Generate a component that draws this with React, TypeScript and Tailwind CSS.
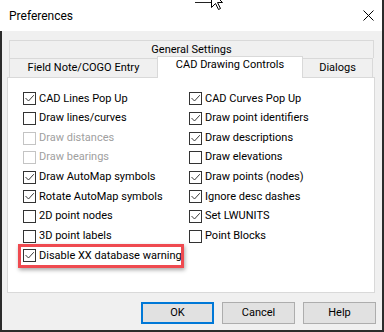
import React from "react";

type Item = { label: string; checked?: boolean; disabled?: boolean; mark?: boolean };

const leftItems: Item[] = [
  { label: "CAD Lines Pop Up", checked: true },
  { label: "Draw lines/curves" },
  { label: "Draw distances", disabled: true },
  { label: "Draw bearings", disabled: true },
  { label: "Draw AutoMap symbols", checked: true },
  { label: "Rotate AutoMap symbols", checked: true },
  { label: "2D point nodes" },
  { label: "3D point labels" },
  { label: "Disable XX database warning", checked: true, mark: true },
];

const rightItems: Item[] = [
  { label: "CAD Curves Pop Up", checked: true },
  { label: "Draw point identifiers", checked: true },
  { label: "Draw descriptions", checked: true },
  { label: "Draw elevations" },
  { label: "Draw points (nodes)", checked: true },
  { label: "Ignore desc dashes", checked: true },
  { label: "Set LWUNITS", checked: true },
  { label: "Point Blocks" },
];

function CheckRow({ item }: { item: Item }) {
  return (
    <div className="relative flex items-center h-[19.625px]">
      {item.mark && (
        <span className="absolute left-[-5px] top-[-2px] w-[166px] h-[24px] border-[3px] border-[#ef4a50] shadow-[1px_2px_4px_rgba(0,0,0,0.35)]" />
      )}
      <span
        className={`w-[13px] h-[13px] border bg-white shrink-0 ${
          item.disabled ? "border-[#c4c4c4]" : "border-[#333333]"
        }`}
      >
        {item.checked && (
          <svg width="11" height="11" viewBox="0 0 11 11" className="block">
            <polyline points="1.5,5 4.5,8 9.8,2.2" fill="none" stroke="#3a3a3a" strokeWidth="1" />
          </svg>
        )}
      </span>
      <span className={`ml-[3px] whitespace-nowrap ${item.disabled ? "text-[#a0a0a0]" : "text-black"}`}>
        {item.label}
      </span>
    </div>
  );
}

export default function App() {
  return (
    <div
      className="relative w-[384px] h-[332px] overflow-hidden bg-white border-r-2 border-[#2b2b2b] flex flex-col text-[11px] text-black"
      style={{ fontFamily: "Roboto, 'Liberation Sans', sans-serif" }}
    >
      {/* Title bar */}
      <div className="h-[31px] shrink-0 flex items-center justify-between pl-[9px] pr-[8px]">
        <span className="text-[12px] pt-[1px]">Preferences</span>
        <svg width="11" height="11" viewBox="0 0 11 11">
          <path d="M0.5 0.5 L10.5 10.5 M10.5 0.5 L0.5 10.5" stroke="#000" strokeWidth="1" />
        </svg>
      </div>

      {/* mouse pointer */}
      <span className="absolute left-[195px] top-[2px] w-[17px] h-px bg-[#222]" />
      <svg className="absolute left-[211px] top-[-9px]" width="13" height="20" viewBox="0 0 13 20">
        <polygon
          points="0.5,0.5 0.5,16.5 4.5,12.5 7.5,18.5 9.5,17.5 6.5,11.5 11.5,11.5"
          fill="#fff"
          stroke="#000"
          strokeWidth="1"
        />
      </svg>

      {/* Body */}
      <div className="flex-1 bg-[#f0f0f0] border-l-2 border-b-2 border-[#2b2b2b] flex flex-col pt-[9px]">
        <div className="ml-[5px] w-[368px]">
          {/* back tab row */}
          <div className="ml-[2px] w-[365px] h-[18px] border border-b-0 border-[#d9d9d9] text-center leading-[16px] pt-[1px]">
            General Settings
          </div>
          {/* front tab row */}
          <div className="flex items-end h-[19px] ml-[2px]">
            <div className="w-[148px] h-[19px] border-t border-l border-[#d9d9d9] text-center leading-[16px] pt-[1px]">
              Field Note/COGO Entry
            </div>
            <div className="relative z-10 -mb-px w-[146px] h-[22px] bg-white border-t border-x border-[#d9d9d9] text-center leading-[16px]">
              CAD Drawing Controls
            </div>
            <div className="w-[70px] h-[19px] border-t border-r border-[#d9d9d9] text-center leading-[16px] pt-[1px]">
              Dialogs
            </div>
          </div>
          {/* panel */}
          <div className="h-[216px] bg-white border border-[#d9d9d9] pt-[11px] pl-[15px] flex">
            <div className="w-[166px] flex flex-col">
              {leftItems.map((it) => (
                <CheckRow key={it.label} item={it} />
              ))}
            </div>
            <div className="flex flex-col">
              {rightItems.map((it) => (
                <CheckRow key={it.label} item={it} />
              ))}
            </div>
          </div>
        </div>

        {/* buttons */}
        <div className="flex justify-end gap-2 mt-[9px] mr-[6px]">
          <button className="w-[73px] h-[22px] bg-[#e1e1e1] border-2 border-[#0078d7]">OK</button>
          <button className="w-[73px] h-[22px] bg-[#e1e1e1] border border-[#adadad]">Cancel</button>
          <button className="w-[73px] h-[22px] bg-[#e1e1e1] border border-[#adadad]">Help</button>
        </div>
      </div>
    </div>
  );
}
